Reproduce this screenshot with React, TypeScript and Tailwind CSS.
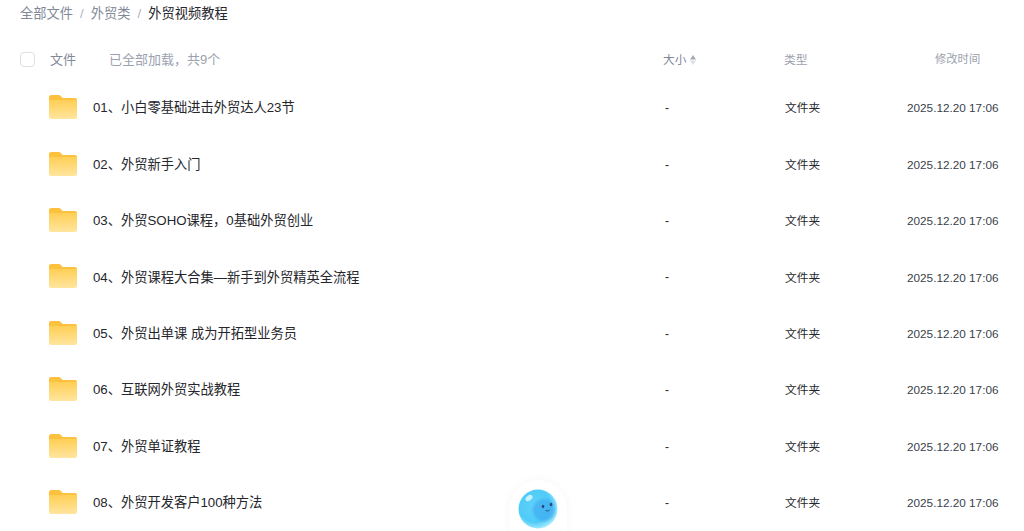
const files = [
  "01、小白零基础进击外贸达人23节",
  "02、外贸新手入门",
  "03、外贸SOHO课程，0基础外贸创业",
  "04、外贸课程大合集—新手到外贸精英全流程",
  "05、外贸出单课 成为开拓型业务员",
  "06、互联网外贸实战教程",
  "07、外贸单证教程",
  "08、外贸开发客户100种方法",
];

function FolderIcon() {
  return (
    <svg width="28" height="24" viewBox="0 0 28 24" className="mt-[-2px] shrink-0">
      <defs>
        <linearGradient id="folderBody" x1="0" y1="0" x2="0" y2="1">
          <stop offset="0" stopColor="#ffcf55" />
          <stop offset="1" stopColor="#ffe59f" />
        </linearGradient>
      </defs>
      <path d="M2.2 0H9.5C10.6 0 11.3 0.4 12 1.2L13.6 3H26C27.2 3 28 3.9 28 5V10H0V2.2C0 0.9 0.9 0 2.2 0Z" fill="#fdc140" />
      <path d="M0 5H28V22C28 23.2 27.2 24 26 24H2C0.8 24 0 23.2 0 22Z" fill="url(#folderBody)" />
    </svg>
  );
}

function Mascot() {
  return (
    <div className="absolute left-[509px] top-[480px] flex h-[70px] w-[58px] items-start justify-center rounded-t-full bg-white pt-[9px] shadow-[0_0_10px_rgba(0,0,0,0.04)]">
      <svg width="40" height="40" viewBox="0 0 40 40">
        <defs>
          <radialGradient id="ball" cx="0.42" cy="0.42" r="0.6">
            <stop offset="0" stopColor="#5fd2f9" />
            <stop offset="0.7" stopColor="#4fcbf8" />
            <stop offset="1" stopColor="#a5ebfd" />
          </radialGradient>
          <radialGradient id="ballInner" cx="0.5" cy="0.5" r="0.5">
            <stop offset="0" stopColor="#3aa5ef" />
            <stop offset="0.7" stopColor="#3aa5ef" />
            <stop offset="1" stopColor="#3aa5ef" stopOpacity="0" />
          </radialGradient>
        </defs>
        <circle cx="20" cy="20" r="19.5" fill="url(#ball)" />
        <ellipse cx="26" cy="21" rx="13" ry="13" fill="url(#ballInner)" opacity="0.6" />
        <ellipse cx="11" cy="9" rx="4" ry="2.5" fill="#c4f2fd" transform="rotate(-35 11 9)" />
        <ellipse cx="25" cy="17.5" rx="1.3" ry="1.7" fill="#2a4a7d" />
        <ellipse cx="33" cy="15.5" rx="1.3" ry="1.7" fill="#2a4a7d" />
        <path d="M27.5 21.5Q29.5 23 31.5 21" stroke="#2a4a7d" strokeWidth="0.9" fill="none" />
      </svg>
    </div>
  );
}

export default function App() {
  return (
    <main className="relative h-[531px] w-[1024px] overflow-hidden bg-white font-['Liberation_Sans','Noto_Sans_CJK_SC',sans-serif] text-xs">
      <nav className="flex h-[28px] items-center gap-[7px] pl-5 text-[13.25px] text-[#818999]">
        <span>全部文件</span>
        <span className="text-[#afb3bf]">/</span>
        <span>外贸类</span>
        <span className="text-[#afb3bf]">/</span>
        <span className="text-[#25262b]">外贸视频教程</span>
      </nav>

      <div className="mt-[11px] flex h-[41px] items-center text-[#818999]">
        <div className="ml-5 h-[15px] w-[15px] rounded-[4px] border border-[#dcdfe6]" />
        <span className="ml-[15px] w-[59px] text-[13px]">文件</span>
        <span className="w-[554px] text-[13px] text-[#9ba1af]">已全部加载，共9个</span>
        <span className="flex w-[121px] items-center gap-[4px] text-[11.7px]">
          大小
          <svg width="6" height="10" viewBox="0 0 6 10">
            <path d="M3 0L6 4.4H0Z" fill="#a3a8b4" />
            <path d="M3 10L6 5.6H0Z" fill="#dcdfe5" />
          </svg>
        </span>
        <span className="w-[151px] text-[11.7px] text-[#9ba1af]">类型</span>
        <span className="text-[11.3px] text-[#9ba1af]">修改时间</span>
      </div>

      <ul className="text-[#25262b]">
        {files.map((name) => (
          <li key={name} className="flex h-[56.4px] items-center">
            <div className="ml-[49px] flex w-[615px] items-center gap-[16px]">
              <FolderIcon />
              <span className="text-[13.25px]">{name}</span>
            </div>
            <span className="w-[121px] pl-[1px]">-</span>
            <span className="w-[122px] text-[11.7px]">文件夹</span>
            <span className="text-[11.75px] text-[#3a3f4b]">2025.12.20 17:06</span>
          </li>
        ))}
      </ul>

      <Mascot />
    </main>
  );
}
